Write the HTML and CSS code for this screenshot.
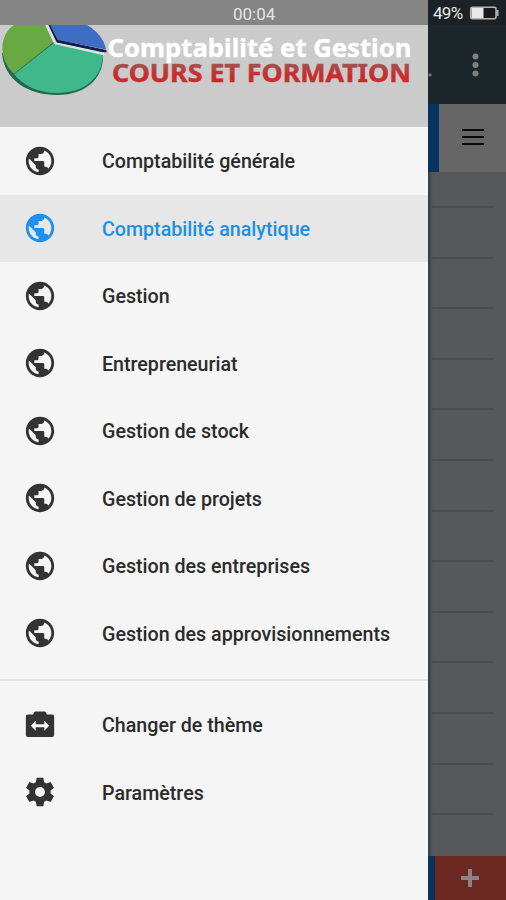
FILE: index.html
```html
<!DOCTYPE html>
<html lang="fr">
<head>
<meta charset="utf-8">
<title>Comptabilité et Gestion</title>
<link rel="stylesheet" href="styles.css">
</head>
<body>
<svg class="defs" aria-hidden="true">
  <symbol id="globe" viewBox="0 0 24 24"><path d="M12 2C6.480 2 2 6.480 2 12s4.480 10 10 10 10-4.480 10-10S17.520 2 12 2zm-1 17.930c-3.950-.490-7-3.850-7-7.930 0-.620.080-1.210.210-1.790L9 15v1c0 1.100.900 2 2 2v1.930zm6.900-2.540c-.260-.810-1-1.390-1.900-1.390h-1v-3c0-.550-.450-1-1-1H8v-2h2c.550 0 1-.450 1-1V7h2c1.100 0 2-.900 2-2v-.410c2.930 1.190 5 4.060 5 7.410 0 2.080-.800 3.970-2.100 5.390z"/></symbol>
  <symbol id="switch" viewBox="0 0 24 24"><path fill-rule="evenodd" d="M20.500 4.500h-3.830V3.500L15.500 2.500H8.500L7.330 3.500V4.500H3.500Q2 4.500 2 6V19Q2 20.500 3.500 20.500H20.500Q22 20.500 22 19V6Q22 4.500 20.500 4.500zM15 16V13.500H9V16L5.500 12.500 9 9V11.500H15V9L18.500 12.500z"/></symbol>
  <symbol id="gear" viewBox="0 0 24 24"><path d="M19.430 12.980c.040-.320.070-.640.070-.980s-.030-.660-.070-.980l2.110-1.650c.190-.150.240-.420.120-.640l-2-3.460c-.120-.220-.390-.300-.610-.220l-2.490 1c-.520-.400-1.080-.730-1.690-.980l-.380-2.650C14.460 2.180 14.250 2 14 2h-4c-.250 0-.460.180-.490.420l-.380 2.650c-.610.250-1.170.590-1.690.980l-2.490-1c-.230-.090-.490 0-.610.220l-2 3.460c-.130.220-.070.490.120.640l2.110 1.650c-.040.320-.070.650-.070.980s.030.660.070.980l-2.110 1.650c-.190.150-.240.420-.120.640l2 3.460c.120.220.390.300.610.220l2.490-1c.520.400 1.080.730 1.690.980l.380 2.650c.030.240.240.420.490.420h4c.250 0 .460-.180.490-.420l.380-2.650c.610-.250 1.170-.590 1.690-.980l2.490 1c.230.090.490 0 .610-.220l2-3.460c.120-.220.070-.490-.120-.640l-2.110-1.650zM12 15.500c-1.930 0-3.500-1.570-3.500-3.500s1.570-3.500 3.500-3.500 3.500 1.570 3.500 3.500-1.570 3.500-3.500 3.500z"/></symbol>
</svg>
<div class="screen">
  <aside class="drawer">
    <div class="status"><span class="clock">00:04</span></div>
    <header class="banner">
      <svg width="428" height="102" viewBox="0 25 428 102">
        <defs>
          <linearGradient id="red" x1="0" y1="0" x2="0" y2="1"><stop offset=".25" stop-color="#a15452"/><stop offset=".6" stop-color="#cb2b2a"/></linearGradient>
        </defs>
        <path class="pie-shadow" d="M2 53C4 80 28 95 57 95C86 95 103 78 103 57L103 50L53 42Z"/>
        <path class="pie-green" d="M53.500 42.500L14 74C-3 58 0 34 14 25H46Z"/>
        <path class="pie-teal" d="M54 43L103 53C103 79 83 93 57 93C38 93 22 85 14 74Z"/>
        <path class="pie-gap" d="M46.500 25L55 43L104 54"/>
        <path class="pie-edge" d="M50 25L57.500 40L106 50.500V52L57 42L49 25Z"/>
        <path class="pie-blue" d="M50.500 25H87C97 31 104 39 106 49.500L58 40Z"/>
        <path class="pie-seam" d="M53.500 42.500L14 74"/>
        <g class="logo-text">
          <text class="logo-top" x="107.500" y="57" textLength="304" lengthAdjust="spacingAndGlyphs">Comptabilité et Gestion</text>
          <text class="logo-bottom" x="112" y="82" textLength="299" lengthAdjust="spacingAndGlyphs">COURS ET FORMATION</text>
        </g>
      </svg>
    </header>
    <nav class="menu">
      <a class="item"><svg class="icon"><use href="#globe"/></svg><span>Comptabilité générale</span></a>
      <a class="item active"><svg class="icon"><use href="#globe"/></svg><span>Comptabilité analytique</span></a>
      <a class="item"><svg class="icon"><use href="#globe"/></svg><span>Gestion</span></a>
      <a class="item"><svg class="icon"><use href="#globe"/></svg><span>Entrepreneuriat</span></a>
      <a class="item"><svg class="icon"><use href="#globe"/></svg><span>Gestion de stock</span></a>
      <a class="item"><svg class="icon"><use href="#globe"/></svg><span>Gestion de projets</span></a>
      <a class="item"><svg class="icon"><use href="#globe"/></svg><span>Gestion des entreprises</span></a>
      <a class="item"><svg class="icon"><use href="#globe"/></svg><span>Gestion des approvisionnements</span></a>
      <hr class="divider">
      <a class="item"><svg class="icon"><use href="#switch"/></svg><span>Changer de thème</span></a>
      <a class="item"><svg class="icon"><use href="#gear"/></svg><span>Paramètres</span></a>
    </nav>
  </aside>
  <main class="page">
    <div class="status-right">
      <span>49%</span>
      <svg width="30" height="16" viewBox="0 0 30 16"><rect x="1.700" y="2.200" width="25.300" height="11.600" rx="1.500" fill="#171b1d" stroke="#b5b5b5" stroke-width="1.500"/><rect x="2.500" y="3" width="12" height="10" fill="#e9e9e9"/><rect x="27.500" y="5" width="2" height="6" fill="#b5b5b5"/></svg>
    </div>
    <div class="toolbar">
      <svg width="78" height="79" viewBox="0 0 78 79"><circle cx="2" cy="50" r="1.800" fill="#687074"/><g fill="#7d8182"><circle cx="47.500" cy="31.500" r="3"/><circle cx="47.500" cy="40" r="3"/><circle cx="47.500" cy="48.500" r="3"/></g></svg>
    </div>
    <div class="tabs">
      <svg width="22" height="18" viewBox="0 0 22 18"><path d="M0 1H22M0 8H22M0 15H22" stroke="#0a0a0a" stroke-width="2"/></svg>
    </div>
    <div class="list">
      <i></i><i></i><i></i><i></i><i></i><i></i><i></i><i></i><i></i><i></i><i></i><i></i><i></i>
    </div>
    <div class="add">
      <svg width="18" height="18" viewBox="0 0 18 18"><path d="M9 0V18M0 9H18" stroke="#898583" stroke-width="4"/></svg>
    </div>
  </main>
</div>
</body>
</html>
```
FILE: styles.css
```css
* { box-sizing: border-box; }
body { margin: 0; font-family: Roboto, "Liberation Sans", sans-serif; }
svg { display: block; flex: none; }
.defs { position: absolute; width: 0; height: 0; }
.screen { display: flex; width: 506px; height: 900px; overflow: hidden; }

.drawer { width: 428px; flex: none; background: #f5f5f5; }
.status { height: 25px; display: flex; align-items: center; padding: 3px 0 0 233px; background: #858585; color: #e4e4e4; font-size: 17px; line-height: 20px; }
.banner { height: 102px; background: #cbcbcb; }
.pie-shadow { fill: #23674f; }
.pie-green { fill: #68a943; }
.pie-teal { fill: #3fb88b; }
.pie-blue { fill: #3e6dc4; }
.pie-edge { fill: #101c4b; stroke: #101c4b; stroke-width: 1; }
.pie-gap { fill: none; stroke: #dce1e1; stroke-width: 2.5; }
.pie-seam { fill: none; stroke: #397c49; stroke-width: 1; }
.logo-text { font-family: "Noto Sans", "Open Sans", sans-serif; font-weight: 700; font-size: 25px; }
.logo-top { fill: #fff; stroke: #fff; stroke-width: .4; }
.logo-bottom { fill: url(#red); stroke: url(#red); stroke-width: .5; }

.item { display: flex; align-items: center; height: 67.5px; padding-left: 23px; gap: 45px; color: #2b2b2b; font-size: 19.65px; font-weight: 500; white-space: nowrap; }
.item span { padding-top: 2px; }
.active { background: #e7e7e7; color: #1b91e3; }
.icon { width: 34px; height: 34px; fill: #333; }
.active .icon { fill: #1b91f0; }
.divider { height: 2px; margin: 12px 0 10px; border: 0; background: #e4e4e4; }

.page { flex: 1; display: flex; flex-direction: column; background: #565859; box-shadow: inset 3px 0 3px -1px #353a3d; }
.status-right { height: 25px; display: flex; align-items: center; gap: 7px; padding: 1px 0 0 5px; background: #1b2124; color: #e6e6e6; font-size: 17px; letter-spacing: -.7px; }
.toolbar { height: 79px; background: #1d262a; }
.tabs { height: 68px; display: flex; align-items: center; padding-left: 23px; background: #666; border-left: 11px solid #083260; }
.list { height: 684px; padding: 34px 13px 0 4px; display: flex; flex-direction: column; gap: 48.6px; }
.list i { height: 2px; flex: none; background: #4b4d4e; }
.add { height: 44px; display: flex; align-items: center; padding-left: 26px; background: #6b2921; border-left: 7px solid #083260; }
```
